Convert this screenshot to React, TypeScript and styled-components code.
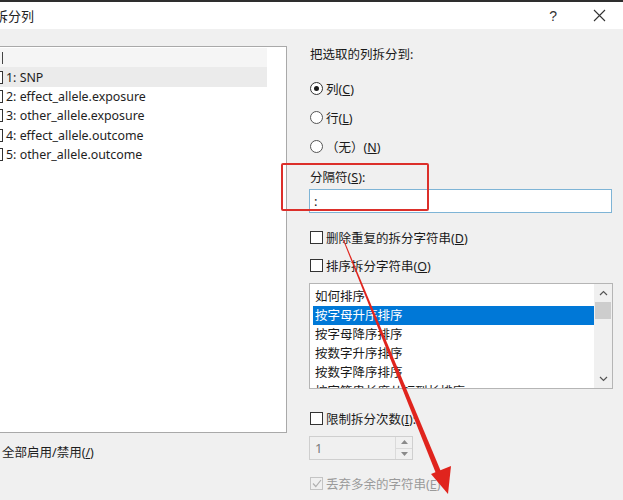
import React from "react";
import styled, { createGlobalStyle } from "styled-components";

const Global = createGlobalStyle`
  html, body { margin: 0; padding: 0; background: #f0f0f0; overflow: hidden; }
  * { box-sizing: border-box; }
`;

const FONT = `"Noto Sans", "Noto Sans CJK SC", sans-serif`;

const Window = styled.div`
  position: relative;
  width: 623px;
  height: 500px;
  overflow: hidden;
  background: #f0f0f0;
  font-family: ${FONT};
  color: #1a1a1a;
  font-size: 12.5px;
`;

const TitleBar = styled.div`
  height: 29px;
  border-top: 2px solid #2e2e2e;
  background: #ffffff;
  display: flex;
  align-items: center;
`;

const Title = styled.div`
  margin-left: -5px;
  font-size: 13px;
  color: #222;
`;

const TitleButtons = styled.div`
  margin-left: auto;
  display: flex;
  align-items: center;
  margin-right: 14px;
`;

const HelpButton = styled.div`
  margin-right: 32px;
  font-size: 14px;
  color: #333;
  font-family: "Liberation Sans", sans-serif;
`;

const CloseButton = styled.div`
  width: 20px;
  display: flex;
  justify-content: center;
`;

const Body = styled.div`
  display: flex;
  padding-top: 17px;
  gap: 22px;
`;

const LeftCol = styled.div`
  margin-left: -2px;
  width: 289px;
  display: flex;
  flex-direction: column;
`;

const FieldList = styled.div`
  height: 387px;
  background: #fff;
  border: 1px solid #a9a9a9;
  padding-top: 1px;
  overflow: hidden;
`;

const FieldRow = styled.div<{ $shade?: string }>`
  height: 19.4px;
  width: 268px;
  display: flex;
  align-items: center;
  background: ${(p) => p.$shade || "transparent"};
  font-size: 12.4px;
  color: #1e1e1e;
  white-space: nowrap;
`;

const EdgeBox = styled.span`
  width: 13px;
  height: 13px;
  margin-left: -9px;
  margin-right: 3px;
  border: 1px solid #333;
  background: #fff;
  flex: none;
`;

const EdgeLine = styled.span`
  width: 1px;
  height: 12px;
  margin-left: 3px;
  background: #444;
`;

const AllToggle = styled.div`
  margin-top: 9px;
  padding-left: 4px;
  font-size: 12.5px;
  color: #1e1e1e;
`;

const RightCol = styled.div`
  width: 304px;
  display: flex;
  flex-direction: column;
`;

const Heading = styled.div`
  height: 18px;
  line-height: 18px;
  padding-left: 1px;
`;

const OptionRow = styled.div<{ $mt: number; $disabled?: boolean }>`
  margin-top: ${(p) => p.$mt}px;
  height: 20px;
  display: flex;
  align-items: center;
  gap: 3px;
  padding-left: 1px;
  color: ${(p) => (p.$disabled ? "#9a9a9a" : "#1a1a1a")};
`;

const Radio = styled.span<{ $on?: boolean }>`
  width: 13px;
  height: 13px;
  border-radius: 50%;
  border: 1px solid ${(p) => (p.$on ? "#333" : "#555")};
  background: #fff;
  display: flex;
  align-items: center;
  justify-content: center;
  flex: none;
  &::after {
    content: "";
    width: 5px;
    height: 5px;
    border-radius: 50%;
    background: ${(p) => (p.$on ? "#1a1a1a" : "transparent")};
  }
`;

const Check = styled.span<{ $disabled?: boolean }>`
  width: 13px;
  height: 13px;
  border: 1px solid ${(p) => (p.$disabled ? "#c4c4c4" : "#333")};
  background: ${(p) => (p.$disabled ? "#f0f0f0" : "#fff")};
  display: flex;
  align-items: center;
  justify-content: center;
  flex: none;
`;

const U = styled.span`
  text-decoration: underline;
`;

const SepGroup = styled.div`
  position: relative;
  margin-top: 13px;
`;

const SepLabel = styled.div`
  height: 18px;
  line-height: 18px;
  padding-left: 1px;
`;

const TextInput = styled.div`
  margin-top: 2px;
  height: 24px;
  width: 303px;
  background: #fff;
  border: 1px solid #7eb4d6;
  padding-left: 4px;
  display: flex;
  align-items: center;
  font-size: 13px;
`;

const Highlight = styled.div`
  position: absolute;
  left: -28px;
  top: -6px;
  width: 148px;
  height: 48px;
  border: 2px solid #dc2f2a;
  border-radius: 2px;
  pointer-events: none;
`;

const SortList = styled.div`
  margin-top: 8px;
  height: 106px;
  width: 304px;
  background: #fff;
  border: 1px solid #b5b5b5;
  display: flex;
  overflow: hidden;
`;

const SortItems = styled.div`
  flex: 1;
  padding: 3px 0 0 3px;
`;

const SortItem = styled.div<{ $sel?: boolean }>`
  height: 19px;
  line-height: 19px;
  padding-left: 2px;
  background: ${(p) => (p.$sel ? "#0078d7" : "transparent")};
  color: ${(p) => (p.$sel ? "#fff" : "#1a1a1a")};
  white-space: nowrap;
`;

const ScrollBar = styled.div`
  width: 18px;
  background: #f0f0f0;
  display: flex;
  flex-direction: column;
  align-items: stretch;
`;

const ScrollArrow = styled.div`
  height: 18px;
  display: flex;
  align-items: center;
  justify-content: center;
`;

const Thumb = styled.div`
  height: 17px;
  background: #cdcdcd;
  margin: 0 1px;
`;

const ScrollTrack = styled.div`
  flex: 1;
`;

const Spin = styled.div`
  margin-top: 8px;
  width: 104px;
  height: 24px;
  border: 1px solid #cfcfcf;
  background: #f0f0f0;
  display: flex;
`;

const SpinValue = styled.div`
  flex: 1;
  padding-left: 5px;
  display: flex;
  align-items: center;
  color: #7a7a7a;
  font-size: 13px;
`;

const SpinButtons = styled.div`
  width: 17px;
  border-left: 1px solid #dadada;
  display: flex;
  flex-direction: column;
`;

const SpinHalf = styled.div`
  flex: 1;
  display: flex;
  align-items: center;
  justify-content: center;
  & + & { border-top: 1px solid #dadada; }
`;

const ArrowOverlay = styled.svg`
  position: absolute;
  left: 0;
  top: 0;
  pointer-events: none;
`;

const leftRows = [
  "1: SNP",
  "2: effect_allele.exposure",
  "3: other_allele.exposure",
  "4: effect_allele.outcome",
  "5: other_allele.outcome",
];

const sortRows = [
  "如何排序",
  "按字母升序排序",
  "按字母降序排序",
  "按数字升序排序",
  "按数字降序排序",
  "按字符串长度从短到长排序",
];

function Chevron({ up }: { up?: boolean }) {
  return (
    <svg width="9" height="6" viewBox="0 0 9 6">
      <path
        d={up ? "M1 5 L4.5 1.5 L8 5" : "M1 1 L4.5 4.5 L8 1"}
        fill="none"
        stroke="#555"
        strokeWidth="1.2"
      />
    </svg>
  );
}

function Tri({ up }: { up?: boolean }) {
  return (
    <svg width="7" height="4" viewBox="0 0 7 4">
      <path d={up ? "M0 4 L3.5 0 L7 4 Z" : "M0 0 L3.5 4 L7 0 Z"} fill="#8a8a8a" />
    </svg>
  );
}

export default function App() {
  return (
    <>
      <Global />
      <Window>
        <TitleBar>
          <Title>拆分列</Title>
          <TitleButtons>
            <HelpButton>?</HelpButton>
            <CloseButton>
              <svg width="13" height="13" viewBox="0 0 13 13">
                <path d="M1 1 L12 12 M12 1 L1 12" stroke="#333" strokeWidth="1.1" />
              </svg>
            </CloseButton>
          </TitleButtons>
        </TitleBar>
        <Body>
          <LeftCol>
            <FieldList>
              <FieldRow $shade="#f5f5f5">
                <EdgeLine />
              </FieldRow>
              {leftRows.map((r, i) => (
                <FieldRow key={r} $shade={i === 0 ? "#ebebeb" : undefined}>
                  <EdgeBox />
                  {r}
                </FieldRow>
              ))}
            </FieldList>
            <AllToggle>
              全部启用/禁用(<U>/</U>)
            </AllToggle>
          </LeftCol>
          <RightCol>
            <Heading>把选取的列拆分到:</Heading>
            <OptionRow $mt={14}>
              <Radio $on />
              <span>
                列(<U>C</U>)
              </span>
            </OptionRow>
            <OptionRow $mt={9}>
              <Radio />
              <span>
                行(<U>L</U>)
              </span>
            </OptionRow>
            <OptionRow $mt={9}>
              <Radio />
              <span>
                （无）(<U>N</U>)
              </span>
            </OptionRow>
            <SepGroup>
              <SepLabel>
                分隔符(<U>S</U>):
              </SepLabel>
              <TextInput>:</TextInput>
              <Highlight />
            </SepGroup>
            <OptionRow $mt={14}>
              <Check />
              <span>
                删除重复的拆分字符串(<U>D</U>)
              </span>
            </OptionRow>
            <OptionRow $mt={8}>
              <Check />
              <span>
                排序拆分字符串(<U>O</U>)
              </span>
            </OptionRow>
            <SortList>
              <SortItems>
                {sortRows.map((s, i) => (
                  <SortItem key={s} $sel={i === 1}>
                    {s}
                  </SortItem>
                ))}
              </SortItems>
              <ScrollBar>
                <ScrollArrow>
                  <Chevron up />
                </ScrollArrow>
                <Thumb />
                <ScrollTrack />
                <ScrollArrow>
                  <Chevron />
                </ScrollArrow>
              </ScrollBar>
            </SortList>
            <OptionRow $mt={19}>
              <Check />
              <span>
                限制拆分次数(<U>I</U>):
              </span>
            </OptionRow>
            <Spin>
              <SpinValue>1</SpinValue>
              <SpinButtons>
                <SpinHalf>
                  <Tri up />
                </SpinHalf>
                <SpinHalf>
                  <Tri />
                </SpinHalf>
              </SpinButtons>
            </Spin>
            <OptionRow $mt={13} $disabled>
              <Check $disabled>
                <svg width="10" height="9" viewBox="0 0 10 9">
                  <path d="M1 4.5 L3.8 7.5 L9 1" fill="none" stroke="#b0b0b0" strokeWidth="1.2" />
                </svg>
              </Check>
              <span>
                丢弃多余的字符串(<U>E</U>)
              </span>
            </OptionRow>
          </RightCol>
        </Body>
        <ArrowOverlay width="623" height="500" viewBox="0 0 623 500">
          <polygon
            points="343,240 344,240 442,474 437,476"
            fill="#e0241d"
          />
          <polygon points="448,494 431,474 451,466" fill="#e0241d" />
        </ArrowOverlay>
      </Window>
    </>
  );
}
